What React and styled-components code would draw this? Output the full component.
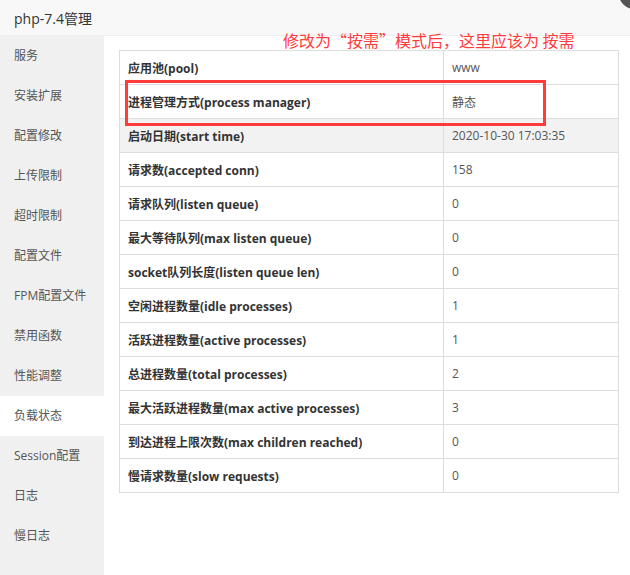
import React from "react";
import styled, { createGlobalStyle } from "styled-components";

const GlobalStyle = createGlobalStyle`
  html, body {
    margin: 0;
    padding: 0;
    background: #fff;
  }
  body {
    font-family: "Open Sans", "Noto Sans CJK SC", sans-serif;
    color: #333;
  }
`;

// 레이어 전체
const Layer = styled.div`
  position: relative;
  width: 630px;
  height: 575px;
  overflow: hidden;
  display: flex;
  flex-direction: column;
  background: #fff;
`;

const Header = styled.div`
  height: 36px;
  flex-shrink: 0;
  box-sizing: border-box;
  padding-left: 14px;
  display: flex;
  align-items: center;
  background: #f8f8f8;
  border-bottom: 1px solid #eee;
  font-size: 14px;
  color: #333;
`;

const CloseDot = styled.span`
  position: absolute;
  left: 619px;
  top: -21px;
  width: 30px;
  height: 30px;
  border-radius: 50%;
  background: #555;
`;

const Body = styled.div`
  flex: 1;
  display: flex;
`;

const Sidebar = styled.ul`
  list-style: none;
  margin: 0;
  padding: 0;
  width: 104px;
  flex-shrink: 0;
  background: #f0f0f0;
`;

const MenuItem = styled.li`
  height: 40px;
  line-height: 40px;
  padding-left: 14px;
  font-size: 12px;
  color: #555;
  background: ${(p) => (p.active ? "#fff" : "transparent")};
`;

const Content = styled.div`
  flex: 1;
  padding: 14px 11px 0 15px;
`;

const Table = styled.table`
  width: 500px;
  border-collapse: collapse;
  font-size: 12px;
  table-layout: fixed;
`;

const Row = styled.tr`
  height: 34px;
  background: ${(p) => (p.hover ? "#f2f2f2" : "#fff")};
`;

const LabelCell = styled.td`
  width: 324px;
  box-sizing: border-box;
  border: 1px solid #ddd;
  padding: 0 8px;
  font-weight: 700;
  color: #333;
  white-space: nowrap;
`;

const ValueCell = styled.td`
  border: 1px solid #ddd;
  padding: 0 8px;
  color: #555;
`;

const Note = styled.div`
  position: absolute;
  left: 283px;
  top: 28px;
  font-family: "Noto Sans CJK SC", sans-serif;
  font-size: 16px;
  color: #ff3b3b;
  white-space: nowrap;
`;

const Mark = styled.div`
  position: absolute;
  left: 125px;
  top: 80px;
  width: 421px;
  height: 46px;
  box-sizing: border-box;
  border: 3px solid #ff3b3b;
`;

const menu = [
  "服务",
  "安装扩展",
  "配置修改",
  "上传限制",
  "超时限制",
  "配置文件",
  "FPM配置文件",
  "禁用函数",
  "性能调整",
  "负载状态",
  "Session配置",
  "日志",
  "慢日志",
];

const rows = [
  ["应用池(pool)", "www"],
  ["进程管理方式(process manager)", "静态"],
  ["启动日期(start time)", "2020-10-30 17:03:35"],
  ["请求数(accepted conn)", "158"],
  ["请求队列(listen queue)", "0"],
  ["最大等待队列(max listen queue)", "0"],
  ["socket队列长度(listen queue len)", "0"],
  ["空闲进程数量(idle processes)", "1"],
  ["活跃进程数量(active processes)", "1"],
  ["总进程数量(total processes)", "2"],
  ["最大活跃进程数量(max active processes)", "3"],
  ["到达进程上限次数(max children reached)", "0"],
  ["慢请求数量(slow requests)", "0"],
];

const App = () => {
  return (
    <>
      <GlobalStyle />
      <Layer>
        <Header>php-7.4管理</Header>
        <CloseDot />
        <Body>
          <Sidebar>
            {menu.map((m) => (
              <MenuItem key={m} active={m === "负载状态"}>
                {m}
              </MenuItem>
            ))}
          </Sidebar>
          <Content>
            <Table>
              <tbody>
                {rows.map(([k, v], i) => (
                  <Row key={k} hover={i === 2}>
                    <LabelCell>{k}</LabelCell>
                    <ValueCell>{v}</ValueCell>
                  </Row>
                ))}
              </tbody>
            </Table>
          </Content>
        </Body>
        <Note>修改为“按需”模式后，这里应该为 按需</Note>
        <Mark />
      </Layer>
    </>
  );
};

export default App;
